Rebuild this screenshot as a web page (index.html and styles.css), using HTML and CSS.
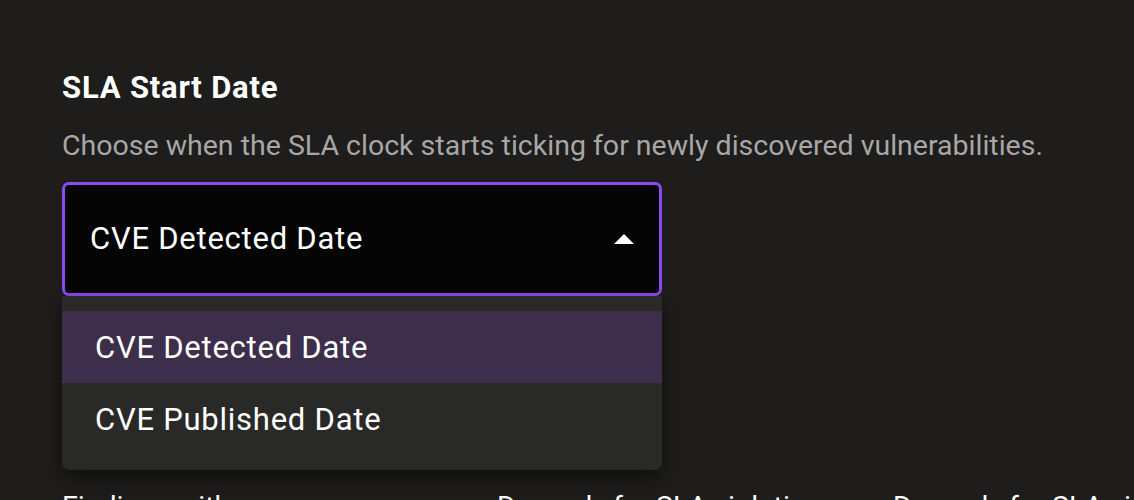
FILE: index.html
```html
<!DOCTYPE html>
<html lang="en">
<head>
<meta charset="utf-8">
<title>SLA Start Date</title>
<link rel="stylesheet" href="styles.css">
</head>
<body>
<main class="page">
  <section class="field">
    <h2 class="field-title">SLA Start Date</h2>
    <p class="field-desc">Choose when the SLA clock starts ticking for newly discovered vulnerabilities.</p>
    <div class="select-wrap">
      <div class="select">
        <span class="select-value">CVE Detected Date</span>
        <svg class="select-arrow" width="20" height="10" viewBox="0 0 20 10" aria-hidden="true"><path d="M0 10 L10 0 L20 10 Z" fill="#ffffff"/></svg>
      </div>
      <ul class="menu">
        <li class="menu-item is-selected">CVE Detected Date</li>
        <li class="menu-item">CVE Published Date</li>
      </ul>
    </div>
  </section>
  <div class="table-head">
    <span class="col col-a">Findings with</span>
    <span class="col col-b">Due only for SLA violations</span>
    <span class="col col-c">Due only for SLA violations</span>
  </div>
</main>
</body>
</html>
```

FILE: styles.css
```css
html, body {
  margin: 0;
  padding: 0;
  background: #1e1d1c;
  height: 100%;
  overflow: hidden;
}
body {
  font-family: Roboto, "Noto Sans", "Liberation Sans", sans-serif;
  color: #ffffff;
}
.page {
  padding: 70px 0 0 62px;
}
.field {
  width: 1050px;
}
.field-title {
  margin: 0;
  font-size: 31px;
  font-weight: 700;
  line-height: 36px;
  letter-spacing: 0.8px;
  color: #ffffff;
}
.field-desc {
  margin: 23px 0 0;
  font-size: 28.5px;
  font-weight: 400;
  line-height: 34px;
  color: #a8a7a6;
  white-space: nowrap;
}
.select-wrap {
  position: relative;
  width: 600px;
  margin-top: 19px;
}
.select {
  box-sizing: border-box;
  height: 114px;
  border: 3px solid #8c4af2;
  border-radius: 7px;
  background: #050505;
  display: flex;
  align-items: center;
  justify-content: space-between;
  padding: 0 25px 0 25px;
}
.select-value {
  font-size: 31px;
  line-height: 36px;
  letter-spacing: 0.75px;
}
.select-arrow {
  display: block;
}
.menu {
  position: absolute;
  left: 0;
  right: 0;
  top: 114px;
  margin: 0;
  padding: 15px 0;
  list-style: none;
  background: #292928;
  border-radius: 0 0 7px 7px;
  box-shadow: 0 8px 20px rgba(0, 0, 0, 0.5);
}
.menu-item {
  height: 72px;
  display: flex;
  align-items: center;
  padding-left: 33px;
  font-size: 31px;
  letter-spacing: 0.75px;
  color: #ffffff;
}
.menu-item.is-selected {
  background: #3d2e4c;
}
.table-head {
  display: flex;
  margin-top: 194px;
  font-size: 28.5px;
  line-height: 34px;
  color: #ffffff;
  white-space: nowrap;
}
.col-a { width: 435px; flex: none; }
.col-b { width: 396px; flex: none; }
```
